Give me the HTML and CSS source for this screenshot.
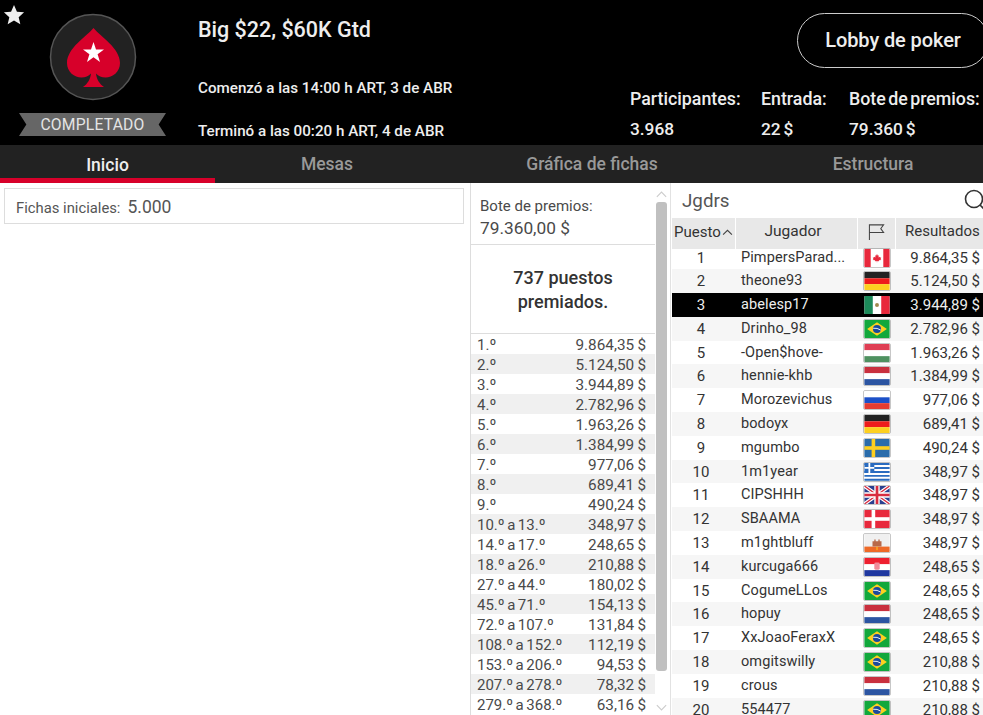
FILE: index.html
```html
<!doctype html>
<html>
<head>
    <meta charset="UTF-8">
    <title>Big $22, $60K Gtd</title>
    <link rel="stylesheet" href="styles.css">
</head>
<body>
<svg class="defs" width="0" height="0">
    <symbol id="f-ca" viewBox="0 0 28 20"><rect width="28" height="20" fill="#fff"/><rect width="7" height="20" fill="#e8283c"/><rect x="21" width="7" height="20" fill="#e8283c"/><path transform="translate(14 10) scale(.72) translate(-14 -10)" d="M14 4l1.400 2.600 1.400-.7-.5 3.200 1.800-1 .5 1.300 1.900-.3-.7 2-.8.5 1.700 1.400-3.800.5.2 1.600-2.700-.4v2h-.8v-2l-2.700.4.2-1.600-3.800-.5 1.700-1.400-.8-.5-.7-2 1.900.3.5-1.300 1.800 1-.5-3.200 1.400.7z" fill="#e8283c"/></symbol>
    <symbol id="f-de" viewBox="0 0 28 20"><rect width="28" height="7" fill="#222"/><rect y="7" width="28" height="6.500" fill="#ee1c1c"/><rect y="13.500" width="28" height="6.500" fill="#fdd020"/></symbol>
    <symbol id="f-mx" viewBox="0 0 28 20"><rect width="28" height="20" fill="#fff"/><rect width="9.300" height="20" fill="#1c8a5a"/><rect x="18.700" width="9.300" height="20" fill="#e8283c"/><circle cx="14" cy="10" r="2.200" fill="#a08a50"/></symbol>
    <symbol id="f-br" viewBox="0 0 28 20"><rect width="28" height="20" fill="#12a83c"/><path d="M14 2.500L25 10 14 17.500 3 10z" fill="#fdd020"/><circle cx="14" cy="10" r="4.500" fill="#1c4a9c"/><path d="M9.700 9.200q4.500-.7 8.500 2" stroke="#fff" fill="none"/></symbol>
    <symbol id="f-hu" viewBox="0 0 28 20"><rect width="28" height="7" fill="#df3e54"/><rect y="7" width="28" height="6.500" fill="#fff"/><rect y="13.500" width="28" height="6.500" fill="#4f9160"/></symbol>
    <symbol id="f-nl" viewBox="0 0 28 20"><rect width="28" height="7" fill="#c9303e"/><rect y="7" width="28" height="6.500" fill="#fff"/><rect y="13.500" width="28" height="6.500" fill="#2c55a2"/></symbol>
    <symbol id="f-ru" viewBox="0 0 28 20"><rect width="28" height="7" fill="#fff"/><rect y="7" width="28" height="6.500" fill="#1c50c8"/><rect y="13.500" width="28" height="6.500" fill="#e43c32"/></symbol>
    <symbol id="f-se" viewBox="0 0 28 20"><rect width="28" height="20" fill="#2a6cab"/><rect x="8" width="4" height="20" fill="#fdcf20"/><rect y="8" width="28" height="4" fill="#fdcf20"/></symbol>
    <symbol id="f-gr" viewBox="0 0 28 20"><rect width="28" height="20" fill="#fff"/><path d="M0 1.100h28M0 5.500h28M0 9.900h28M0 14.300h28M0 18.700h28" stroke="#2a6cc0" stroke-width="2.200"/><rect width="11" height="11" fill="#2a6cc0"/><path d="M5.500 0v11M0 5.500h11" stroke="#fff" stroke-width="2"/></symbol>
    <symbol id="f-gb" viewBox="0 0 28 20"><rect width="28" height="20" fill="#2a3f8f"/><path d="M0 0l28 20M28 0L0 20" stroke="#fff" stroke-width="4"/><path d="M0 0l28 20M28 0L0 20" stroke="#d82c40" stroke-width="1.500"/><path d="M14 0v20M0 10h28" stroke="#fff" stroke-width="6"/><path d="M14 0v20M0 10h28" stroke="#d82c40" stroke-width="3"/></symbol>
    <symbol id="f-dk" viewBox="0 0 28 20"><rect width="28" height="20" fill="#e8283c"/><rect x="8" width="4" height="20" fill="#fff"/><rect y="8" width="28" height="4" fill="#fff"/></symbol>
    <symbol id="f-gi" viewBox="0 0 28 20"><rect width="28" height="20" fill="#f0f0f0"/><rect y="14" width="28" height="6" fill="#ee6a28"/><path d="M9 14V8h2V6h1.500v2h3V6H17v2h2v6z" fill="#b8694a"/><rect x="13.500" y="14" width="1" height="4" fill="#fdd020"/></symbol>
    <symbol id="f-hr" viewBox="0 0 28 20"><rect width="28" height="7" fill="#ee2030"/><rect y="7" width="28" height="6.500" fill="#fff"/><rect y="13.500" width="28" height="6.500" fill="#2038a0"/><rect x="11" y="5" width="6" height="8" rx="1.500" fill="#f08a98"/></symbol>
</svg>

<div class="app">
    <header class="top">
        <svg class="fav" viewBox="0 0 24 24"><path d="M12 1l3.200 7.400 7.800.7-5.900 5.300 1.800 7.800L12 18l-6.900 4.200 1.800-7.800L1 9.100l7.800-.7z" fill="#eee"/></svg>
        <div class="brand">
            <svg class="logo" viewBox="0 0 88 88">
                <circle cx="44" cy="44" r="42.500" fill="#222" stroke="#555" stroke-width="1.500"/>
                <path d="M44.500 15C38 23 18 35 18 50c0 9 7.500 14.500 14.500 14.500 4 0 7-1.500 9.500-4C41.500 66 38.500 71 34 74h21c-4.500-3-7.500-8-8-13.500 2.500 2.500 5.500 4 9.500 4C63.500 64.500 71 59 71 50 71 35 51 23 44.500 15z" fill="#d7002a"/>
                <path d="M44.500 29l2.500 7.500h8l-6.400 4.700 2.400 7.800-6.500-4.800-6.500 4.800 2.400-7.800-6.400-4.700h8z" fill="#fff"/>
            </svg>
            <div class="ribbon">COMPLETADO</div>
        </div>
        <div class="info">
            <h1 class="title">Big $22, $60K Gtd</h1>
            <div class="time start">Comenzó a las 14:00 h ART, 3 de ABR</div>
            <div class="time end">Terminó a las 00:20 h ART, 4 de ABR</div>
        </div>
        <div class="side">
            <div class="lobby">Lobby de poker</div>
            <div class="stats">
                <span class="stat-label">Participantes:</span><span class="stat-label">Entrada:</span><span class="stat-label">Bote de premios:</span>
                <span>3.968</span><span>22 $</span><span>79.360 $</span>
            </div>
        </div>
    </header>

    <nav class="tabs">
        <div class="tab active">Inicio</div>
        <div class="tab">Mesas</div>
        <div class="tab">Gráfica de fichas</div>
        <div class="tab">Estructura</div>
    </nav>

    <main class="content">
        <section class="left">
            <div class="chips">Fichas iniciales:<span>5.000</span></div>
        </section>

        <section class="prizes">
            <div class="pool">
                <div class="pool-label">Bote de premios:</div>
                <div class="pool-value">79.360,00 $</div>
            </div>
            <div class="paid">737 puestos premiados.</div>
            <ul class="prize-list">
                <li><span>1.º</span><span>9.864,35 $</span></li>
                <li><span>2.º</span><span>5.124,50 $</span></li>
                <li><span>3.º</span><span>3.944,89 $</span></li>
                <li><span>4.º</span><span>2.782,96 $</span></li>
                <li><span>5.º</span><span>1.963,26 $</span></li>
                <li><span>6.º</span><span>1.384,99 $</span></li>
                <li><span>7.º</span><span>977,06 $</span></li>
                <li><span>8.º</span><span>689,41 $</span></li>
                <li><span>9.º</span><span>490,24 $</span></li>
                <li><span>10.º a 13.º</span><span>348,97 $</span></li>
                <li><span>14.º a 17.º</span><span>248,65 $</span></li>
                <li><span>18.º a 26.º</span><span>210,88 $</span></li>
                <li><span>27.º a 44.º</span><span>180,02 $</span></li>
                <li><span>45.º a 71.º</span><span>154,13 $</span></li>
                <li><span>72.º a 107.º</span><span>131,84 $</span></li>
                <li><span>108.º a 152.º</span><span>112,19 $</span></li>
                <li><span>153.º a 206.º</span><span>94,53 $</span></li>
                <li><span>207.º a 278.º</span><span>78,32 $</span></li>
                <li><span>279.º a 368.º</span><span>63,16 $</span></li>
            </ul>
        </section>

        <div class="scrollbar">
            <svg class="arrow" viewBox="0 0 14 10"><path d="M2 8l5-5 5 5" fill="none" stroke="#ccc" stroke-width="1.200"/></svg>
            <div class="thumb"></div>
            <svg class="arrow" viewBox="0 0 14 10"><path d="M2 2l5 5 5-5" fill="none" stroke="#ccc" stroke-width="1.200"/></svg>
        </div>

        <section class="players">
            <div class="search">
                <span>Jgdrs</span>
                <svg class="search-icon" viewBox="0 0 24 24"><circle cx="10" cy="10" r="8.500" fill="none" stroke="#333" stroke-width="1.600"/><path d="M16 16l6 6" stroke="#333" stroke-width="1.600"/></svg>
            </div>
            <div class="row head">
                <div class="sort">Puesto<svg viewBox="0 0 10 6"><path d="M1 5l4-4 4 4" fill="none" stroke="#444"/></svg></div>
                <div class="head-name">Jugador</div>
                <div><svg class="flag-head" viewBox="0 0 18 18"><path d="M1.500 18V2h15l-3 4 3 4h-15" fill="none" stroke="#444" stroke-width="1.100"/></svg></div>
                <div class="head-won">Resultados</div>
            </div>
            <div class="row"><div>1</div><div class="name">PimpersParad...</div><svg class="flag"><use href="#f-ca"/></svg><div class="won">9.864,35 $</div></div>
            <div class="row"><div>2</div><div class="name">theone93</div><svg class="flag"><use href="#f-de"/></svg><div class="won">5.124,50 $</div></div>
            <div class="row me"><div>3</div><div class="name">abelesp17</div><svg class="flag"><use href="#f-mx"/></svg><div class="won">3.944,89 $</div></div>
            <div class="row"><div>4</div><div class="name">Drinho_98</div><svg class="flag"><use href="#f-br"/></svg><div class="won">2.782,96 $</div></div>
            <div class="row"><div>5</div><div class="name">-Open$hove-</div><svg class="flag"><use href="#f-hu"/></svg><div class="won">1.963,26 $</div></div>
            <div class="row"><div>6</div><div class="name">hennie-khb</div><svg class="flag"><use href="#f-nl"/></svg><div class="won">1.384,99 $</div></div>
            <div class="row"><div>7</div><div class="name">Morozevichus</div><svg class="flag"><use href="#f-ru"/></svg><div class="won">977,06 $</div></div>
            <div class="row"><div>8</div><div class="name">bodoyx</div><svg class="flag"><use href="#f-de"/></svg><div class="won">689,41 $</div></div>
            <div class="row"><div>9</div><div class="name">mgumbo</div><svg class="flag"><use href="#f-se"/></svg><div class="won">490,24 $</div></div>
            <div class="row"><div>10</div><div class="name">1m1year</div><svg class="flag"><use href="#f-gr"/></svg><div class="won">348,97 $</div></div>
            <div class="row"><div>11</div><div class="name">CIPSHHH</div><svg class="flag"><use href="#f-gb"/></svg><div class="won">348,97 $</div></div>
            <div class="row"><div>12</div><div class="name">SBAAMA</div><svg class="flag"><use href="#f-dk"/></svg><div class="won">348,97 $</div></div>
            <div class="row"><div>13</div><div class="name">m1ghtbluff</div><svg class="flag"><use href="#f-gi"/></svg><div class="won">348,97 $</div></div>
            <div class="row"><div>14</div><div class="name">kurcuga666</div><svg class="flag"><use href="#f-hr"/></svg><div class="won">248,65 $</div></div>
            <div class="row"><div>15</div><div class="name">CogumeLLos</div><svg class="flag"><use href="#f-br"/></svg><div class="won">248,65 $</div></div>
            <div class="row"><div>16</div><div class="name">hopuy</div><svg class="flag"><use href="#f-nl"/></svg><div class="won">248,65 $</div></div>
            <div class="row"><div>17</div><div class="name">XxJoaoFeraxX</div><svg class="flag"><use href="#f-br"/></svg><div class="won">248,65 $</div></div>
            <div class="row"><div>18</div><div class="name">omgitswilly</div><svg class="flag"><use href="#f-br"/></svg><div class="won">210,88 $</div></div>
            <div class="row"><div>19</div><div class="name">crous</div><svg class="flag"><use href="#f-nl"/></svg><div class="won">210,88 $</div></div>
            <div class="row"><div>20</div><div class="name">554477</div><svg class="flag"><use href="#f-br"/></svg><div class="won">210,88 $</div></div>
        </section>
    </main>
</div>
</body>
</html>
```

FILE: styles.css
```css
* {
    margin: 0;
    padding: 0;
    box-sizing: border-box;
}
html, body {
    height: 715px;
    overflow: hidden;
    background: #fff;
}
body {
    font-family: Roboto, "Liberation Sans", sans-serif;
    color: #333;
}
.defs {
    position: absolute;
}
.app {
    width: 1000px;
    height: 715px;
    display: flex;
    flex-direction: column;
}

/* cabecera */
.top {
    position: relative;
    height: 145px;
    flex: none;
    display: flex;
    background: #000;
    color: #eee;
    font-weight: 500;
}
.fav {
    position: absolute;
    left: 3px;
    top: 4px;
    width: 22px;
    height: 22px;
}
.brand {
    width: 198px;
    flex: none;
    padding: 13px 0 0 19px;
}
.logo {
    display: block;
    width: 88px;
    height: 88px;
    margin-left: 29.500px;
}
.ribbon {
    width: 147px;
    height: 23px;
    margin-top: 12px;
    background: #666;
    clip-path: polygon(0 0, 100% 0, 95% 50%, 100% 100%, 0 100%, 5% 50%);
    color: #e4e4e4;
    font-size: 15.7px;
    font-weight: 400;
    line-height: 24px;
    text-align: center;
    letter-spacing: .2px;
}
.info {
    width: 432px;
    flex: none;
}
.title {
    margin-top: 18px;
    font-size: 21.5px;
    line-height: 24px;
    font-weight: 500;
}
.time {
    font-size: 15.2px;
    line-height: 18px;
}
.start {
    margin-top: 37px;
}
.end {
    margin-top: 25px;
}
.side {
    flex: 1;
    display: flex;
    flex-direction: column;
}
.lobby {
    width: 192px;
    height: 55px;
    margin: 13px 0 0 167px;
    border: 1px solid #ccc;
    border-radius: 28px;
    font-size: 20px;
    letter-spacing: -.1px;
    line-height: 53px;
    text-align: center;
}
.stats {
    display: grid;
    grid-template-columns: 131px 88px auto;
    row-gap: 12px;
    margin-top: 21px;
    font-size: 17.3px;
    word-spacing: -1.500px;
    line-height: 19px;
}
.stat-label {
    font-size: 17.8px;
    word-spacing: -2px;
}

/* pestañas */
.tabs {
    height: 38px;
    flex: none;
    display: grid;
    grid-template-columns: 215px 224px 306px 256px;
    grid-template-rows: 38px;
    background: #222;
    color: #999;
    font-size: 17.5px;
    font-weight: 500;
    text-align: center;
    line-height: 39px;
}
.tab.active {
    color: #eee;
    border-bottom: 5px solid #d7002a;
    line-height: 41px;
}

.content {
    flex: 1;
    display: flex;
    min-height: 0;
    overflow: hidden;
}
.left {
    width: 471px;
    flex: none;
    padding: 5px 6px 0 4px;
    border-right: 1px solid #ddd;
}
.chips {
    height: 36px;
    border: 1px solid #ddd;
    padding-left: 11px;
    font-size: 14.8px;
    line-height: 36px;
    color: #555;
}
.chips span {
    margin-left: 7px;
    font-size: 17.5px;
}

/* premios */
.prizes {
    width: 184px;
    flex: none;
    color: #4a4a4a;
}
.pool {
    height: 62px;
    padding: 14px 0 0 9px;
    border-bottom: 1px solid #ddd;
}
.pool-label {
    font-size: 15px;
    line-height: 18px;
}
.pool-value {
    margin-top: 3px;
    font-size: 17.3px;
    line-height: 21px;
}
.paid {
    height: 89px;
    padding: 21px 30px 0;
    border-bottom: 1px solid #ddd;
    font-size: 18px;
    font-weight: 500;
    line-height: 24px;
    text-align: center;
    color: #333;
}
.prize-list {
    list-style: none;
}
.prize-list li {
    height: 20px;
    display: flex;
    justify-content: space-between;
    padding: 1px 9px 0 6px;
    font-size: 15.3px;
    word-spacing: -.5px;
    line-height: 20px;
}
.prize-list li span:first-child {
    font-size: 15px;
    word-spacing: -1.200px;
}
.prize-list li:nth-child(even) {
    background: #f0f0f0;
}
.scrollbar {
    width: 16px;
    flex: none;
    display: flex;
    flex-direction: column;
    align-items: center;
    padding-right: 3px;
    border-right: 1px solid #e2e2e2;
    margin-right: 1px;
}
.arrow {
    width: 13px;
    height: 10px;
    flex: none;
    margin: 6px 0 3px;
}
.thumb {
    width: 11px;
    height: 469px;
    flex: none;
    background: #c0c0c0;
    border-radius: 3px;
}
.scrollbar .thumb + .arrow {
    margin-top: 32px;
}

/* jugadores */
.players {
    flex: 1;
    min-width: 0;
    font-size: 15px;
}
.search {
    height: 35px;
    display: flex;
    justify-content: space-between;
    align-items: center;
    padding: 0 12px 0 10px;
    font-size: 18.8px;
    color: #555;
}
.search-icon {
    width: 24px;
    height: 24px;
}
.row {
    height: 23.8px;
    display: grid;
    grid-template-columns: 58px 133px 28px 1fr;
    align-items: center;
    color: #333;
    line-height: 24px;
}
.row > div:first-child {
    text-align: center;
}
.row:nth-child(even) {
    background: #f6f6f6;
}
.row.me {
    background: #000;
    color: #eee;
}
.name {
    padding-left: 11px;
    font-size: 14.5px;
    letter-spacing: .1px;
}
.won {
    text-align: right;
    padding-right: 20px;
}
.flag {
    width: 28px;
    height: 20px;
    border: 1px solid rgba(0, 0, 0, .22);
    border-radius: 2px;
}
.row.head {
    height: 27.5px;
    grid-template-columns: 63px 121px 37px 1fr;
    column-gap: 1px;
    align-items: stretch;
    background: #fff;
    line-height: 27px;
}
.row.head > div {
    background: #e8e8e8;
    text-align: center;
}
.row.head > .sort {
    display: flex;
    align-items: center;
    padding: 0 0 2px 2px;
}
.sort svg {
    width: 11px;
    height: 7px;
    margin-left: 1px;
}
.row.head > .head-name {
    padding-right: 7px;
    font-size: 15.5px;
}
.row.head > .head-won {
    padding-left: 9px;
    text-align: left;
}
.flag-head {
    width: 17px;
    height: 17px;
    margin-top: 5px;
}
```
